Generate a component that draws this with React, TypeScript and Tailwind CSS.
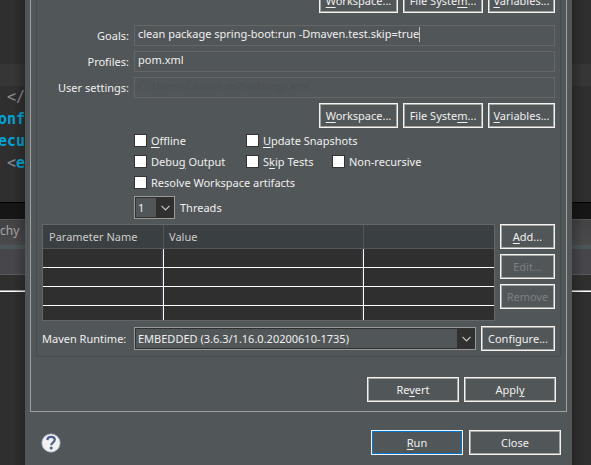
import type { ReactNode } from "react";

function DialogButton({
  children,
  className = "",
  primary = false,
  disabled = false,
}: {
  children: ReactNode;
  className?: string;
  primary?: boolean;
  disabled?: boolean;
}) {
  const ring = primary ? "outline-[#0078d7]" : "outline-[#a4a4a0]";
  const tone = disabled ? "text-[#7d7f80]" : "text-[#f0f0f0]";
  return (
    <button
      type="button"
      disabled={disabled}
      className={`h-[25px] shrink-0 whitespace-nowrap border border-[#f4f4f4] text-center outline-1 -outline-offset-2 ${ring} ${tone} ${className}`}
    >
      {children}
    </button>
  );
}

function Key({ children }: { children: ReactNode }) {
  return <u className="underline decoration-1 underline-offset-2">{children}</u>;
}

function PathButtons() {
  return (
    <div className="col-span-2 flex justify-end gap-[5px]">
      <DialogButton className="w-[79px]">
        <Key>W</Key>orkspace...
      </DialogButton>
      <DialogButton className="w-[80px]">
        File Syste<Key>m</Key>...
      </DialogButton>
      <DialogButton className="w-[67px]">
        <Key>V</Key>ariables...
      </DialogButton>
    </div>
  );
}

function Check({ children, className = "" }: { children: ReactNode; className?: string }) {
  return (
    <label className={`flex h-[21px] items-center gap-1 whitespace-nowrap ${className}`}>
      <input
        type="checkbox"
        className="size-[13px] shrink-0 appearance-none border border-[#333333] bg-white"
      />
      <span>{children}</span>
    </label>
  );
}

function Combo({ id, value, className = "" }: { id: string; value: string; className?: string }) {
  return (
    <div className={`relative h-[23px] border border-[#999999] ${className}`}>
      <select
        id={id}
        defaultValue={value}
        className="block h-full w-full appearance-none border border-[#303030] bg-[#515658] pl-[2px] pr-[18px] text-[#f0f0f0]"
      >
        <option>{value}</option>
      </select>
      <span className="pointer-events-none absolute inset-y-0 right-0 flex w-[18px] items-center justify-center bg-[#303030]">
        <svg width="9" height="6" viewBox="0 0 9 6" fill="none" stroke="#c8c8c8" strokeWidth="1.2">
          <path d="M0.5 0.8 4.5 4.8 8.5 0.8" />
        </svg>
      </span>
    </div>
  );
}

function Field({ id, label, children }: { id: string; label: ReactNode; children: ReactNode }) {
  return (
    <>
      <label htmlFor={id} className="whitespace-nowrap text-right">
        {label}
      </label>
      <div className="flex h-[21px] items-center border border-[#646668] pb-[3px] pl-[3px]">
        {children}
      </div>
    </>
  );
}

function EditorLower() {
  return (
    <>
      <div className="h-px bg-black" />
      <div className="h-4 bg-[#161616]" />
    </>
  );
}

const cell = "border-r border-b border-r-white border-b-white shadow-[inset_-2px_0_0_#3b3d44]";

export default function App() {
  return (
    <div className="flex h-screen overflow-hidden bg-[#2f2f2f] font-['Noto_Sans','Open_Sans',sans-serif] text-[11px] leading-4 text-[#f0f0f0]">
      <aside className="relative w-[25px] shrink-0 overflow-hidden">
        <div className="h-16" />
        <div className="h-[22px] bg-[#363636]" />
        <div className="flex h-[116px] flex-col items-end whitespace-pre font-['DejaVu_Sans_Mono',monospace] text-[15px] leading-[22px]">
          <span className="text-[#8a8a8a]">&lt;/</span>
          <span className="font-bold text-[#02a3d6]">onf</span>
          <span className="font-bold text-[#02a3d6]">ecu</span>
          <span className="font-bold text-[#02a3d6]">
            <span className="font-normal text-[#8a8a8a]">&lt;</span>e
          </span>
        </div>
        <EditorLower />
        <div className="h-[26px] border-t border-[#555555] bg-linear-to-b from-[#434345] to-[#4a4a4d] text-[12px] leading-[22px] text-[#a8a8a8]">
          chy
        </div>
        <div className="h-1 bg-[#4c5557]" />
        <div className="h-[26px] border-b border-[#5a5a5a] bg-[#46464b]" />
        <div className="h-[15px]" />
        <div className="h-[2px] border-t border-[#a0a0a0] bg-white" />
        <div className="pointer-events-none absolute inset-y-0 right-0 w-3 bg-linear-to-r from-black/0 to-black/20" />
      </aside>

      <main className="flex min-w-0 flex-1 flex-col bg-[#515658] px-[5px]">
        <section className="border-x border-b border-[#a0a0a0] px-[5px] pb-[9px]">
          <form className="border-x border-b border-[#484b4e] px-[5px] pb-[5px]">
            <div className="flex h-[13px] flex-col justify-end overflow-hidden">
              <PathButtons />
            </div>

            <div className="mt-3 grid grid-cols-[87px_1fr] items-center gap-[5px]">
              <Field id="goals" label="Goals:">
                <input
                  id="goals"
                  defaultValue="clean package spring-boot:run -Dmaven.test.skip=true"
                  className="[field-sizing:content] outline-none"
                />
                <span className="h-[15px] w-px bg-[#c0c0c0]" />
              </Field>
              <Field id="profiles" label="Profiles:">
                <input id="profiles" defaultValue="pom.xml" className="w-full outline-none" />
              </Field>
              <Field id="settings" label="User settings:">
                <input
                  id="settings"
                  readOnly
                  defaultValue="C:\Users\Cássio\.m2\settings.xml"
                  className="w-full text-[#4c5153] outline-none"
                />
              </Field>
              <PathButtons />
            </div>

            <div className="ml-[92px] mt-[2px]">
              <div className="flex">
                <Check className="w-[112px]">
                  <Key>O</Key>ffline
                </Check>
                <Check>
                  <Key>U</Key>pdate Snapshots
                </Check>
              </div>
              <div className="flex">
                <Check className="w-[112px]">
                  Debu<Key>g</Key> Output
                </Check>
                <Check className="w-[86px]">
                  S<Key>k</Key>ip Tests
                </Check>
                <Check>Non-recursive</Check>
              </div>
              <Check>Resolve Workspace artifacts</Check>
              <div className="mt-[3px] flex items-center gap-[5px]">
                <Combo id="threads" value="1" className="w-[41px]" />
                <label htmlFor="threads">Threads</label>
              </div>
            </div>

            <div className="mt-[5px] flex gap-[5px]">
              <div className="h-[97px] min-w-0 flex-1 overflow-hidden border border-[#646668] bg-[#2f2f2f]">
                <table className="w-full table-fixed border-separate border-spacing-0 text-left text-[#cccccc]">
                  <colgroup>
                    <col className="w-[121px]" />
                    <col className="w-[200px]" />
                    <col />
                  </colgroup>
                  <thead>
                    <tr className="h-6 bg-[#3a3f42]">
                      <th className="border-r border-b border-[#53575a] pl-[6px] font-normal">
                        Parameter Name
                      </th>
                      <th className="border-r border-b border-[#53575a] pl-[5px] font-normal">
                        Value
                      </th>
                      <th className="border-b border-[#53575a]" />
                    </tr>
                  </thead>
                  <tbody>
                    {[0, 1, 2, 3].map((row) => (
                      <tr key={row} className="h-[19px]">
                        <td className={cell} />
                        <td className={cell} />
                        <td className="border-b border-white" />
                      </tr>
                    ))}
                  </tbody>
                </table>
              </div>
              <div className="flex w-[55px] shrink-0 flex-col gap-[5px]">
                <DialogButton>
                  <Key>A</Key>dd...
                </DialogButton>
                <DialogButton disabled>Edit...</DialogButton>
                <DialogButton disabled>Remove</DialogButton>
              </div>
            </div>

            <div className="mt-[5px] flex items-center gap-[5px]">
              <label htmlFor="runtime" className="w-[87px] shrink-0 whitespace-nowrap">
                Maven Runtime:
              </label>
              <Combo
                id="runtime"
                value="EMBEDDED (3.6.3/1.16.0.20200610-1735)"
                className="min-w-0 flex-1"
              />
              <DialogButton className="w-[74px]">Configure...</DialogButton>
            </div>
          </form>

          <div className="mt-5 flex justify-end gap-[5px] pr-[5px]">
            <DialogButton className="w-[92px]">
              Re<Key>v</Key>ert
            </DialogButton>
            <DialogButton className="w-[92px]">
              Appl<Key>y</Key>
            </DialogButton>
          </div>
        </section>

        <footer className="mt-[18px] flex items-center gap-[6px] pl-[11px] pr-[6px]">
          <button type="button" aria-label="Help" className="mr-auto">
            <svg width="20" height="20" viewBox="0 0 20 20">
              <circle cx="10" cy="10" r="9.3" fill="#f1f1f1" stroke="#7f8da3" strokeWidth="0.8" />
              <path
                d="M6.3 7.1C6.4 4.9 7.9 3.8 10.1 3.8 12.4 3.8 13.8 5 13.8 6.8 13.8 9.3 10.3 9.3 10.3 12.2"
                fill="none"
                stroke="#4d608c"
                strokeWidth="2.2"
              />
              <circle cx="10.2" cy="15" r="1.5" fill="#4d608c" />
            </svg>
          </button>
          <DialogButton className="w-[92px]" primary>
            <Key>R</Key>un
          </DialogButton>
          <DialogButton className="w-[92px]">Close</DialogButton>
        </footer>
      </main>

      <aside className="relative w-[19px] shrink-0">
        <div className="h-16" />
        <div className="h-[22px] bg-[#363636]" />
        <div className="h-[116px]" />
        <EditorLower />
        <div className="h-[26px] border-t border-[#555555] bg-linear-to-b from-[#434345] to-[#4a4a4d]" />
        <div className="h-1 bg-[#4c5557]" />
        <div className="h-[26px] border-b border-[#5a5a5a] bg-[#46464b]" />
        <div className="h-[15px]" />
        <div className="h-[2px] border-t border-[#a0a0a0] bg-white" />
        <div className="pointer-events-none absolute inset-y-0 left-0 w-3 bg-linear-to-l from-black/0 to-black/20" />
      </aside>
    </div>
  );
}
